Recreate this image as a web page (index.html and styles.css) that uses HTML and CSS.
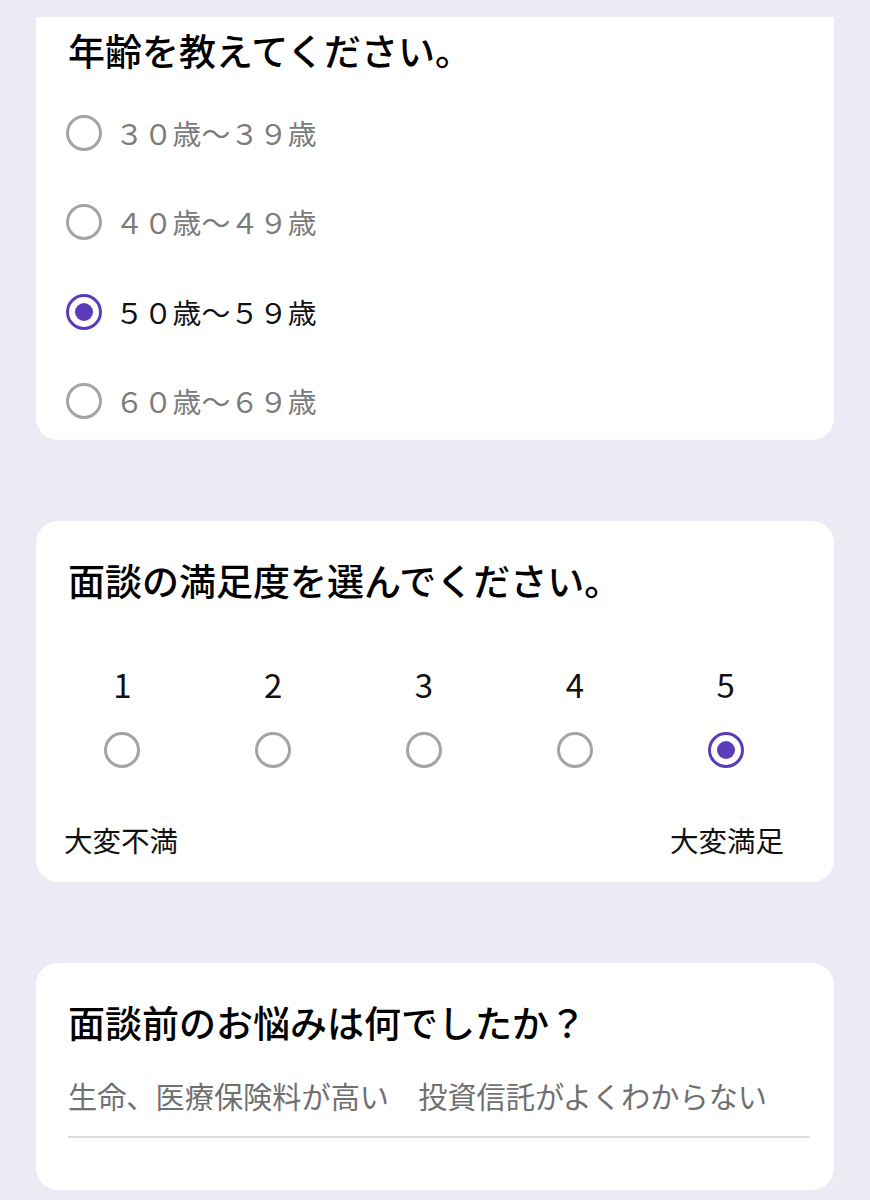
FILE: index.html
```html
<!DOCTYPE html>
<html lang="ja">
<head>
<meta charset="utf-8">
<title>アンケート</title>
<link rel="stylesheet" href="styles.css">
</head>
<body>
<main class="page">
  <section class="card card-first">
    <h2 class="q-title">年齢を教えてください。</h2>
    <div class="options">
      <label class="option"><span class="radio"></span><span class="opt-text">３０歳〜３９歳</span></label>
      <label class="option"><span class="radio"></span><span class="opt-text">４０歳〜４９歳</span></label>
      <label class="option selected"><span class="radio"></span><span class="opt-text">５０歳〜５９歳</span></label>
      <label class="option"><span class="radio"></span><span class="opt-text">６０歳〜６９歳</span></label>
    </div>
  </section>

  <section class="card card-scale">
    <h2 class="q-title">面談の満足度を選んでください。</h2>
    <div class="scale">
      <div class="scale-col"><span class="scale-num">1</span><span class="radio"></span></div>
      <div class="scale-col"><span class="scale-num">2</span><span class="radio"></span></div>
      <div class="scale-col"><span class="scale-num">3</span><span class="radio"></span></div>
      <div class="scale-col"><span class="scale-num">4</span><span class="radio"></span></div>
      <div class="scale-col selected"><span class="scale-num">5</span><span class="radio"></span></div>
    </div>
    <div class="scale-labels">
      <span>大変不満</span>
      <span>大変満足</span>
    </div>
  </section>

  <section class="card card-text">
    <h2 class="q-title">面談前のお悩みは何でしたか？</h2>
    <div class="answer">生命、医療保険料が高い　投資信託がよくわからない</div>
  </section>
</main>
</body>
</html>
```

FILE: styles.css
```css
html, body {
  margin: 0;
  padding: 0;
}

body {
  background: #edeaf6;
  font-family: "Noto Sans CJK JP", "Noto Sans", sans-serif;
  color: #111;
}

.page {
  padding: 17px 36px 0;
  display: flex;
  flex-direction: column;
  gap: 81px;
}

.card {
  background: #fff;
  border-radius: 22px;
  padding: 37px 32px 0;
  box-sizing: border-box;
}

.card-first {
  border-radius: 0 0 22px 22px;
  padding: 11px 32px 19px 30px;
}

.q-title {
  margin: 0;
  font-size: 37px;
  line-height: 44px;
  font-weight: 500;
  color: #000;
  white-space: nowrap;
}

.card-first .q-title {
  padding-left: 2px;
}

.options {
  margin-top: 41px;
  display: flex;
  flex-direction: column;
  gap: 49.3px;
}

.option {
  display: flex;
  align-items: center;
  gap: 13px;
  height: 40px;
}

.opt-text {
  font-size: 28.8px;
  line-height: 40px;
  color: #7b7b7b;
}

.option.selected .opt-text {
  color: #111;
}

.radio {
  width: 36px;
  height: 36px;
  box-sizing: border-box;
  border: 3px solid #a4a4a4;
  border-radius: 50%;
  display: flex;
  align-items: center;
  justify-content: center;
  flex: none;
}

.selected .radio {
  border-color: #5b3dba;
}

.selected .radio::after {
  content: "";
  width: 18px;
  height: 18px;
  border-radius: 50%;
  background: #5b3dba;
}

.card-scale {
  padding-bottom: 24px;
}

.scale {
  margin: 64px 0 0 -21px;
  width: 754px;
  display: grid;
  grid-template-columns: repeat(5, 1fr);
}

.scale-col {
  display: flex;
  flex-direction: column;
  align-items: center;
  gap: 26px;
}

.scale-num {
  font-size: 33px;
  line-height: 40px;
  color: #111;
  margin-top: -2px;
  margin-bottom: 2px;
}

.scale-labels {
  margin: 54px 18px 0 -4px;
  display: flex;
  justify-content: space-between;
  font-size: 28.5px;
  line-height: 36px;
  color: #111;
}

.card-text {
  padding-bottom: 52px;
}

.answer {
  margin-top: 31px;
  font-size: 29.2px;
  line-height: 40px;
  color: #707070;
  padding-bottom: 21px;
  border-bottom: 2px solid #dcdcdc;
  margin-right: -8px;
  white-space: nowrap;
}
```
